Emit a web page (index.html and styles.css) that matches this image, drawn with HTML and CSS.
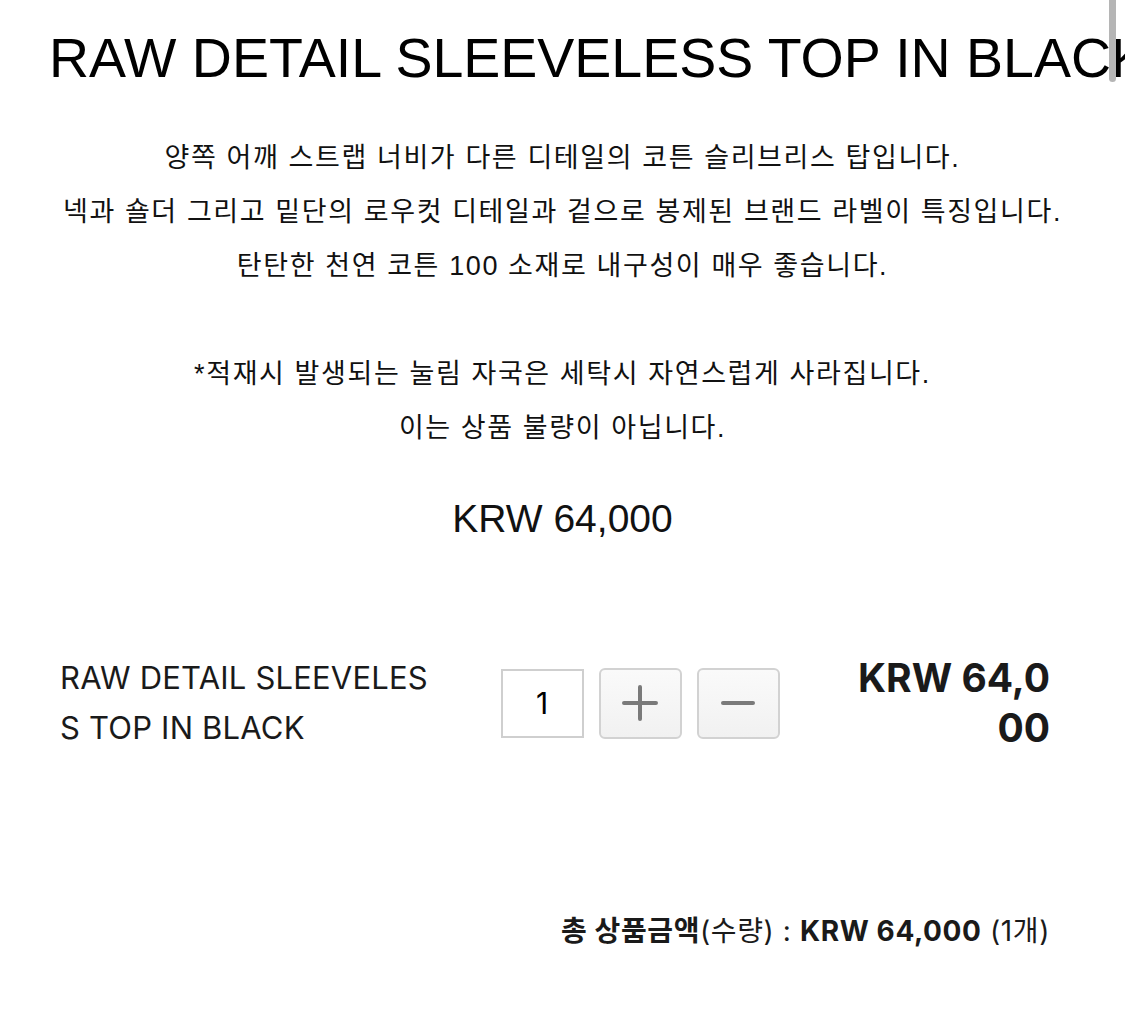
FILE: index.html
```html
<!DOCTYPE html>
<html lang="ko">
<head>
  <meta charset="UTF-8">
  <meta name="viewport" content="width=device-width, initial-scale=1.0">
  <title>RAW DETAIL SLEEVELESS TOP IN BLACK</title>
  <link rel="stylesheet" href="styles.css">
</head>
<body>
  <div class="scroll-indicator"></div>

  <main class="product">
    <h1 class="product-title">RAW DETAIL SLEEVELESS TOP IN BLACK</h1>

    <p class="product-desc">
      양쪽 어깨 스트랩 너비가 다른 디테일의 코튼 슬리브리스 탑입니다.<br>
      넥과 숄더 그리고 밑단의 로우컷 디테일과 겉으로 봉제된 브랜드 라벨이 특징입니다.<br>
      탄탄한 천연 코튼 100 소재로 내구성이 매우 좋습니다.<br>
      <br>
      *적재시 발생되는 눌림 자국은 세탁시 자연스럽게 사라집니다.<br>
      이는 상품 불량이 아닙니다.
    </p>

    <p class="product-price">KRW 64,000</p>

    <div class="option-row">
      <p class="option-name">RAW DETAIL SLEEVELESS TOP IN BLACK</p>

      <div class="qty">
        <span class="qty-input">1</span>
        <button class="qty-btn" aria-label="수량 증가">
          <svg width="36" height="36" viewBox="0 0 36 36"><path d="M18 2v32M2 18h32" stroke="#7a7a7a" stroke-width="4" stroke-linecap="round" fill="none"/></svg>
        </button>
        <button class="qty-btn" aria-label="수량 감소">
          <svg width="36" height="36" viewBox="0 0 36 36"><path d="M3 18h30" stroke="#7a7a7a" stroke-width="4" stroke-linecap="round" fill="none"/></svg>
        </button>
      </div>

      <p class="option-price">KRW 64,000</p>
    </div>

    <p class="total">
      <strong>총 상품금액</strong>(수량) : <strong>KRW 64,000</strong> (1개)
    </p>
  </main>
</body>
</html>
```

FILE: styles.css
```css
html, body {
  margin: 0;
  padding: 0;
  background-color: #fff;
  overflow: hidden;
}

body {
  color: #111;
  font-family: "Liberation Sans", "Noto Sans CJK KR", sans-serif;
}

.scroll-indicator {
  position: fixed;
  top: 0;
  right: 9px;
  width: 7px;
  height: 82px;
  background-color: #b5b5b5;
  border-radius: 0 0 4px 4px;
  z-index: 10;
}

.product {
  padding: 26px 75px 60px 60px;
}

.product-title {
  margin: 0 0 0 -11px;
  font-size: 55.5px;
  font-weight: normal;
  line-height: 64px;
  white-space: nowrap;
  color: #000;
}

.product-desc {
  margin: 41px -75px 0 -60px;
  font-size: 27px;
  letter-spacing: 1.6px;
  line-height: 54px;
  text-align: center;
}

.product-price {
  margin: 42px -75px 0 -60px;
  font-size: 39px;
  line-height: 44px;
  text-align: center;
}

.option-row {
  display: grid;
  grid-template-columns: 372px auto 200px;
  justify-content: space-between;
  align-items: center;
  margin-top: 112px;
  font-family: "Inter", "Noto Sans CJK KR", sans-serif;
  color: #1a1a1a;
}

.option-name {
  margin: 0;
  font-size: 31px;
  letter-spacing: 0.2px;
  line-height: 50px;
  word-break: break-all;
}

.qty {
  display: flex;
  align-items: center;
  gap: 15px;
  margin-left: -2px;
}

.qty-input {
  display: flex;
  justify-content: center;
  align-items: center;
  width: 79px;
  height: 65px;
  border: 2px solid #cfcfcf;
  font-size: 30px;
  color: #000;
}

.qty-btn {
  display: flex;
  justify-content: center;
  align-items: center;
  width: 83px;
  height: 71px;
  padding: 0;
  border: 2px solid #d2d2d2;
  border-radius: 6px;
  background: linear-gradient(#fafafa, #f1f1f1);
  cursor: pointer;
}

.option-price {
  margin: 0;
  font-size: 39px;
  font-weight: bold;
  line-height: 50px;
  text-align: right;
  word-break: break-all;
}

.total {
  margin: 158px 0 0;
  font-family: "Inter", "Noto Sans CJK KR", sans-serif;
  font-size: 28px;
  letter-spacing: 0.6px;
  line-height: 40px;
  text-align: right;
  color: #1a1a1a;
}

.total strong {
  font-weight: bold;
}
```
